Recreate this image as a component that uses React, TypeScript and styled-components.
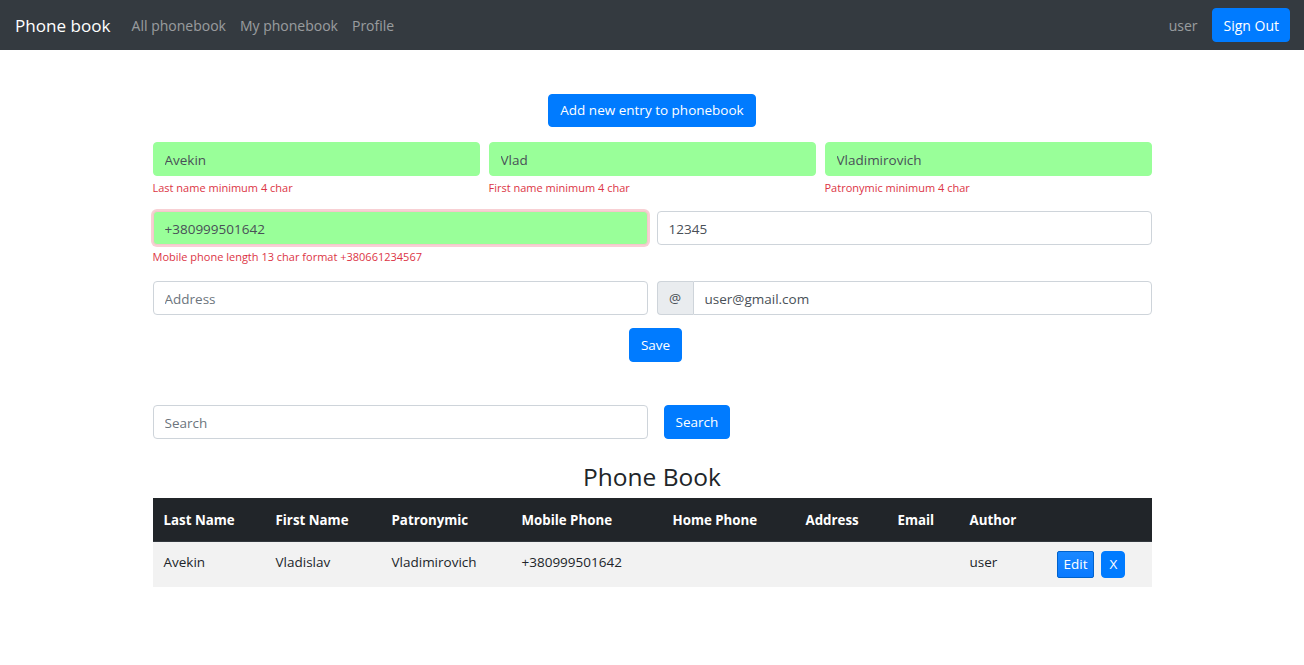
import React from "react";
import styled, { createGlobalStyle, css } from "styled-components";

const GlobalStyle = createGlobalStyle`
  html, body { margin: 0; padding: 0; background: #fff; }
  body {
    font-family: "Open Sans", "Noto Sans", sans-serif;
    font-size: 13px;
    color: #212529;
  }
  * { box-sizing: border-box; }
`;

const Navbar = styled.nav`
  height: 50px;
  background: #343a40;
  display: flex;
  align-items: center;
  padding: 0 14px 0 15px;
`;

const Brand = styled.a`
  color: #fff;
  font-size: 17.1px;
  margin-right: 14px;
  text-decoration: none;
`;

const NavLink = styled.a`
  color: rgba(255, 255, 255, 0.5);
  font-size: 14px;
  padding: 0 7px;
  text-decoration: none;
`;

const NavRight = styled.div`
  margin-left: auto;
  display: flex;
  align-items: center;
  gap: 8px;
`;

const Button = styled.button<{ $h?: number; $px?: number; $fs?: number }>`
  background: #007bff;
  color: #fff;
  border: 1px solid #007bff;
  border-radius: 4px;
  font-family: inherit;
  font-size: ${(p) => p.$fs ?? 13.5}px;
  height: ${(p) => p.$h ?? 34}px;
  padding: 1px ${(p) => p.$px ?? 11}px 0;
  line-height: 1;
  cursor: pointer;
`;

const Main = styled.main`
  width: 999px;
  margin: 0 auto;
  padding-top: 44px;
  display: flex;
  flex-direction: column;
`;

const Center = styled.div<{ $mt?: number; $shift?: number }>`
  display: flex;
  justify-content: center;
  margin-top: ${(p) => p.$mt ?? 0}px;
  padding-left: ${(p) => p.$shift ?? 0}px;
`;

const Row = styled.div<{ $cols: number; $mt: number }>`
  display: grid;
  grid-template-columns: repeat(${(p) => p.$cols}, 1fr);
  column-gap: 9px;
  margin-top: ${(p) => p.$mt}px;
`;

const Field = styled.div`
  display: flex;
  flex-direction: column;
`;

const Input = styled.input<{ $valid?: boolean; $focus?: boolean }>`
  height: 34px;
  width: 100%;
  font-family: inherit;
  font-size: 13.5px;
  color: #495057;
  padding: 1px 11px 0;
  border: 1px solid #ced4da;
  border-radius: 4px;
  background: #fff;
  outline: none;
  &::placeholder { color: #6c757d; opacity: 1; }
  ${(p) =>
    p.$valid &&
    css`
      background: #99ff99;
      border-color: #99ff99;
    `}
  ${(p) =>
    p.$focus &&
    css`
      border-color: #f5c6cb;
      box-shadow: 0 0 0 2px #f8d0d4;
    `}
`;

const ErrorText = styled.small`
  color: #dc3545;
  font-size: 11px;
  line-height: 14px;
  margin-top: 5px;
`;

const InputGroup = styled.div`
  display: flex;
  height: 34px;
`;

const Addon = styled.span`
  width: 36px;
  display: flex;
  align-items: center;
  justify-content: center;
  background: #e9ecef;
  border: 1px solid #ced4da;
  border-right: none;
  border-radius: 4px 0 0 4px;
  color: #495057;
  font-size: 13.5px;
`;

const GroupInput = styled(Input)`
  border-radius: 0 4px 4px 0;
  flex: 1;
`;

const SearchRow = styled.div`
  display: grid;
  grid-template-columns: 495px auto 1fr;
  column-gap: 16px;
  margin-top: 43px;
`;

const Heading = styled.h2`
  margin: 22px 0 5px;
  text-align: center;
  font-weight: 400;
  font-size: 24.5px;
  line-height: 32px;
  color: #212529;
`;

const Table = styled.table`
  width: 999px;
  border-collapse: collapse;
  table-layout: fixed;
`;

const Th = styled.th<{ $w: number }>`
  width: ${(p) => p.$w}px;
  background: #212529;
  color: #fff;
  text-align: left;
  font-weight: 700;
  font-size: 13.3px;
  height: 43px;
  padding: 2px 11px 0;
  border-bottom: 1px solid #32383e;
`;

const Tr = styled.tr`
  background: #f2f2f2;
`;

const Td = styled.td`
  height: 46px;
  padding: 10px 11px 0;
  vertical-align: top;
  font-size: 13.5px;
  line-height: 21px;
  color: #212529;
`;

const ActionCell = styled.td`
  padding: 9px 0 0 11px;
  vertical-align: top;
`;

const Actions = styled.div`
  display: flex;
  gap: 7px;
`;

const EditButton = styled(Button)`
  border-color: #0062cc;
  border-radius: 2px;
  background: linear-gradient(#1a88ff, #0a7aff);
`;

const cols: [string, number][] = [
  ["Last Name", 112],
  ["First Name", 116],
  ["Patronymic", 130],
  ["Mobile Phone", 151],
  ["Home Phone", 133],
  ["Address", 92],
  ["Email", 72],
  ["Author", 87],
  ["", 106],
];

export default function App() {
  return (
    <>
      <GlobalStyle />
      <Navbar>
        <Brand>Phone book</Brand>
        <NavLink>All phonebook</NavLink>
        <NavLink>My phonebook</NavLink>
        <NavLink>Profile</NavLink>
        <NavRight>
          <NavLink>user</NavLink>
          <Button $fs={14} $px={10}>Sign Out</Button>
        </NavRight>
      </Navbar>
      <Main>
        <Center>
          <Button $h={33}>Add new entry to phonebook</Button>
        </Center>
        <Row $cols={3} $mt={15}>
          <Field>
            <Input $valid defaultValue="Avekin" />
            <ErrorText>Last name minimum 4 char</ErrorText>
          </Field>
          <Field>
            <Input $valid defaultValue="Vlad" />
            <ErrorText>First name minimum 4 char</ErrorText>
          </Field>
          <Field>
            <Input $valid defaultValue="Vladimirovich" />
            <ErrorText>Patronymic minimum 4 char</ErrorText>
          </Field>
        </Row>
        <Row $cols={2} $mt={16}>
          <Field>
            <Input $valid $focus defaultValue="+380999501642" />
            <ErrorText>Mobile phone length 13 char format +380661234567</ErrorText>
          </Field>
          <Field>
            <Input defaultValue="12345" />
          </Field>
        </Row>
        <Row $cols={2} $mt={17}>
          <Field>
            <Input placeholder="Address" />
          </Field>
          <InputGroup>
            <Addon>@</Addon>
            <GroupInput defaultValue="user@gmail.com" />
          </InputGroup>
        </Row>
        <Center $mt={13} $shift={7}>
          <Button $px={10.5}>Save</Button>
        </Center>
        <SearchRow>
          <Input placeholder="Search" />
          <Button>Search</Button>
        </SearchRow>
        <Heading>Phone Book</Heading>
        <Table>
          <thead>
            <tr>
              {cols.map(([c, w]) => (
                <Th key={c + w} $w={w}>
                  {c}
                </Th>
              ))}
            </tr>
          </thead>
          <tbody>
            <Tr>
              <Td>Avekin</Td>
              <Td>Vladislav</Td>
              <Td>Vladimirovich</Td>
              <Td>+380999501642</Td>
              <Td></Td>
              <Td></Td>
              <Td></Td>
              <Td>user</Td>
              <ActionCell>
                <Actions>
                  <EditButton $h={27} $px={6}>Edit</EditButton>
                  <Button $h={27} $px={7}>X</Button>
                </Actions>
              </ActionCell>
            </Tr>
          </tbody>
        </Table>
      </Main>
    </>
  );
}
